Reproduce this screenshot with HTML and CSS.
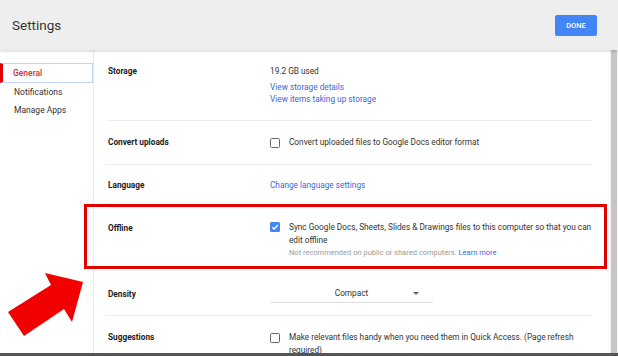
FILE: index.html
```html
<!DOCTYPE html>
<html lang="en">
<head>
    <meta charset="UTF-8">
    <title>Settings</title>
    <link rel="stylesheet" href="styles.css">
</head>
<body>

<div class="window">
    <header class="topbar">
        <h1>Settings</h1>
        <button class="done">Done</button>
    </header>

    <div class="main">
        <nav class="sidebar">
            <a href="#" class="active">General</a>
            <a href="#">Notifications</a>
            <a href="#">Manage Apps</a>
        </nav>

        <div class="content">
            <div class="row">
                <div class="label">Storage</div>
                <div class="value">
                    <div class="used">19.2 GB used</div>
                    <a href="#">View storage details</a>
                    <a href="#">View items taking up storage</a>
                </div>
            </div>

            <div class="row">
                <div class="label">Convert uploads</div>
                <div class="value check">
                    <span class="box"></span>
                    <span class="text">Convert uploaded files to Google Docs editor format</span>
                </div>
            </div>

            <div class="row row-language">
                <div class="label">Language</div>
                <div class="value"><a href="#">Change language settings</a></div>
            </div>

            <div class="row row-offline">
                <div class="label">Offline</div>
                <div class="value check">
                    <span class="box checked">
                        <svg viewBox="0 0 10 10" width="10" height="10"><path d="M2.2 5.2 L4.2 7.1 L7.9 3.1" fill="none" stroke="#fff" stroke-width="1.4"/></svg>
                    </span>
                    <span class="text">
                        Sync Google Docs, Sheets, Slides &amp; Drawings files to this computer so that you can edit offline
                        <span class="hint">Not recommended on public or shared computers. <a href="#">Learn more</a></span>
                    </span>
                </div>
                <div class="highlight"></div>
            </div>

            <div class="row row-density">
                <div class="label">Density</div>
                <div class="value">
                    <div class="select">
                        <span>Compact</span>
                        <span class="caret"></span>
                    </div>
                </div>
            </div>

            <div class="row row-last">
                <div class="label">Suggestions</div>
                <div class="value check">
                    <span class="box"></span>
                    <span class="text">Make relevant files handy when you need them in Quick Access. (Page refresh required)</span>
                </div>
            </div>
        </div>

        <div class="scrollbar"><div class="thumb"></div></div>

        <svg class="arrow" viewBox="0 0 90 70" width="90" height="70">
            <polygon points="8,42 51,15 45,3 83,12 72,52 64,39 24,66" fill="#f20000"/>
        </svg>
    </div>

    <div class="edge"></div>
</div>

</body>
</html>
```

FILE: styles.css
```css
* {
    box-sizing: border-box;
}
body {
    margin: 0;
    font-family: Roboto, "Liberation Sans", Arial, sans-serif;
    background-color: #fff;
    color: #333;
}
a {
    color: #3b68d8;
    text-decoration: none;
}
.window {
    width: 618px;
    height: 356px;
    display: flex;
    flex-direction: column;
    overflow: hidden;
}
.topbar {
    height: 50px;
    flex-shrink: 0;
    display: flex;
    align-items: center;
    justify-content: space-between;
    padding: 0 21px 0 12px;
    background-color: #eeeeee;
    box-shadow: 0 1px 3px rgba(0, 0, 0, 0.2);
    position: relative;
    z-index: 2;
}
.topbar h1 {
    margin: 0;
    font-size: 13.5px;
    font-weight: 400;
    color: #333;
}
.done {
    width: 42px;
    height: 21px;
    background-color: #4285f4;
    border: none;
    border-radius: 2px;
    color: #fff;
    font-family: inherit;
    font-size: 7.5px;
    font-weight: 500;
    text-transform: uppercase;
    padding: 0;
}
.main {
    flex: 1;
    display: flex;
    position: relative;
    overflow: hidden;
}
.sidebar {
    width: 94px;
    flex-shrink: 0;
    border-right: 1px solid #e9e9e9;
    padding-top: 13px;
    display: flex;
    flex-direction: column;
}
.sidebar a {
    display: block;
    height: 18px;
    line-height: 18px;
    padding-left: 14px;
    font-size: 8.5px;
    color: #333;
}
.sidebar a.active {
    height: 20px;
    line-height: 18px;
    color: #d0312d;
    font-weight: 500;
    border: 1px solid #c3d3f3;
    border-left: 3px solid #e00000;
    padding-left: 10px;
}
.content {
    flex: 1;
    padding: 0 18px 0 13px;
}
.row {
    display: grid;
    grid-template-columns: 163px 1fr;
    padding: 15px 0;
    border-bottom: 1px solid #eeeeee;
    font-size: 8.25px;
    line-height: 12px;
    position: relative;
}
.row-language {
    padding: 14px 0 16px;
}
.row-offline {
    padding: 12.5px 0 14.5px;
    border-bottom-color: transparent;
}
.row-offline .label {
    padding-top: 1px;
}
.row-density {
    padding-bottom: 12px;
}
.row-last {
    border-bottom: none;
}
.label {
    font-weight: 700;
    color: #222;
    padding-left: 1px;
}
.value {
    color: #333;
}
.value a {
    display: block;
}
.used {
    margin-bottom: 4px;
}
.check {
    display: flex;
    align-items: flex-start;
}
.box {
    width: 10px;
    height: 10px;
    flex-shrink: 0;
    margin: 1.5px 9px 0 0;
    border: 1.5px solid #666;
    border-radius: 1.5px;
}
.box.checked {
    border: none;
    background-color: #4285f4;
}
.box.checked svg {
    display: block;
}
.check .text {
    flex: 1;
    line-height: 13px;
}
.hint {
    display: block;
    font-size: 7.5px;
    line-height: 11px;
    color: #999;
}
.hint a {
    display: inline;
}
.highlight {
    position: absolute;
    left: -23px;
    right: -15px;
    top: -4px;
    bottom: 3px;
    border: 3px solid #e00000;
}
.select {
    width: 163px;
    height: 20px;
    display: flex;
    align-items: center;
    justify-content: center;
    position: relative;
    border-bottom: 1px solid #e2e2e2;
    margin-top: -5px;
}
.caret {
    position: absolute;
    right: 14px;
    top: 9px;
    border-left: 3px solid transparent;
    border-right: 3px solid transparent;
    border-top: 3px solid #666;
}
.scrollbar {
    width: 8px;
    flex-shrink: 0;
    background-color: #f4f4f4;
    padding-left: 1px;
}
.thumb {
    width: 6px;
    height: 100%;
    background-color: #c6c6c6;
}
.arrow {
    position: absolute;
    left: 0;
    top: 220px;
}
.edge {
    height: 3px;
    flex-shrink: 0;
    background-color: #555;
}
```
